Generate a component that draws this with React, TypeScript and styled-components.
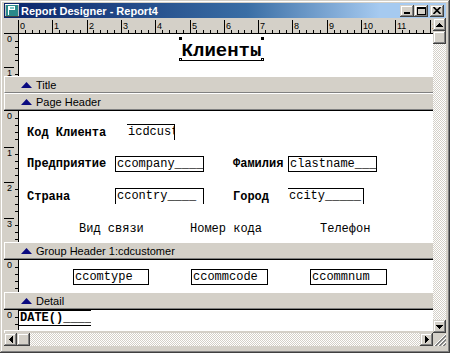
import React from "react";
import styled, { createGlobalStyle, css } from "styled-components";

const FACE = "#d4d0c8";
const SHADOW = "#808080";
const DARK = "#404040";
const MONO = `"Liberation Mono", "DejaVu Sans Mono", monospace`;
const SANS = `"Liberation Sans", Arial, sans-serif`;

const GlobalStyle = createGlobalStyle`
  html, body {
    margin: 0;
    padding: 0;
    background: ${FACE};
  }
  body {
    font-family: ${SANS};
  }
`;

const raised = css`
  background-color: ${FACE};
  box-shadow: inset -1px -1px ${DARK}, inset 1px 1px ${FACE},
    inset -2px -2px ${SHADOW}, inset 2px 2px #ffffff;
`;

const checker = css`
  background-color: #ffffff;
  background-image: repeating-conic-gradient(${FACE} 0% 25%, #ffffff 0% 50%);
  background-size: 2px 2px;
`;

const Window = styled.div`
  width: 450px;
  height: 353px;
  box-sizing: border-box;
  padding: 3px 4px 7px 4px;
  display: flex;
  flex-direction: column;
  background: ${FACE};
  box-shadow: inset -1px -1px ${DARK}, inset 1px 1px ${FACE},
    inset -2px -2px ${SHADOW}, inset 2px 2px #ffffff;
`;

const TitleBar = styled.div`
  flex: none;
  height: 15px;
  display: flex;
  align-items: center;
  padding: 0 2px 0 1px;
  background: linear-gradient(to right, #0a246a, #3a6ea5 55%, #a6caf0 85%);
`;

const WindowTitle = styled.span`
  margin-left: 2px;
  color: #ffffff;
  font: bold 11px ${SANS};
  white-space: nowrap;
`;

const CaptionButtons = styled.div`
  margin-left: auto;
  display: flex;
  align-items: center;
`;

const CaptionButton = styled.div<{ $gap?: boolean }>`
  ${raised};
  width: 14px;
  height: 12px;
  margin-left: ${(p) => (p.$gap ? 2 : 0)}px;
  display: flex;
  align-items: center;
  justify-content: center;
`;

const Workspace = styled.div`
  flex: 1;
  min-height: 0;
  display: grid;
  grid-template-columns: 1fr 13px;
  grid-template-rows: 1fr 13px;
`;

const Designer = styled.div`
  min-height: 0;
  overflow: hidden;
  display: flex;
  flex-direction: column;
`;

const RulerRow = styled.div`
  flex: none;
  height: 16px;
  display: flex;
  background: ${FACE};
  overflow: hidden;
`;

const RulerCorner = styled.div`
  flex: none;
  width: 14px;
  height: 16px;
  box-sizing: border-box;
  border-bottom: 1px solid #000;
`;

const Section = styled.div<{ $h: number; $line?: boolean }>`
  flex: none;
  height: ${(p) => p.$h}px;
  display: grid;
  grid-template-columns: 15px 1fr;
  border-top: ${(p) => (p.$line ? "1px solid #000" : "none")};
`;

const VRulerCol = styled.div`
  background: ${FACE};
  border-right: 1px solid #000;
  overflow: hidden;
`;

const Canvas = styled.div`
  position: relative;
  background: #ffffff;
  overflow: hidden;
  color: #000;
`;

const Band = styled.div`
  flex: none;
  height: 15px;
  display: flex;
  align-items: center;
  gap: 4px;
  padding-left: 16px;
  background: ${FACE};
  border-top: 1px solid #ffffff;
  border-left: 1px solid #ffffff;
  border-bottom: 1px solid ${SHADOW};
  font: 11px ${SANS};
  color: #000;
  white-space: nowrap;
`;

const TitleControl = styled.div`
  position: absolute;
  left: 161px;
  top: 4px;
  width: 83px;
  height: 23px;
  box-sizing: border-box;
  padding-top: 4px;
  border-bottom: 1px solid #000;
  font: bold 19px/19px ${MONO};
  text-align: center;
  white-space: nowrap;
`;

const Handle = styled.span<{ $v: "top" | "bottom"; $h: "left" | "right" }>`
  position: absolute;
  ${(p) => p.$v}: -1px;
  ${(p) => p.$h}: -1px;
  width: 3px;
  height: 3px;
  box-sizing: border-box;
  background: ${(p) => (p.$v === "top" ? "#000" : "#fff")};
  border: 1px solid #000;
`;

const Label = styled.span<{ $x: number; $y: number; $bold?: boolean }>`
  position: absolute;
  left: ${(p) => p.$x}px;
  top: ${(p) => p.$y}px;
  font-family: ${MONO};
  font-size: 12px;
  line-height: 14px;
  font-weight: ${(p) => (p.$bold ? 700 : 400)};
  white-space: pre;
`;

const Field = styled.div<{
  $x: number;
  $y: number;
  $w: number;
  $edges: string;
  $bold?: boolean;
}>`
  position: absolute;
  left: ${(p) => p.$x}px;
  top: ${(p) => p.$y}px;
  width: ${(p) => p.$w}px;
  height: 16px;
  box-sizing: border-box;
  border: 0 solid #000;
  border-width: ${(p) => p.$edges};
  padding-left: 1px;
  font-family: ${MONO};
  font-size: 12px;
  line-height: 14px;
  font-weight: ${(p) => (p.$bold ? 700 : 400)};
  white-space: pre;
  overflow: hidden;
`;

const VScroll = styled.div`
  ${checker};
  display: flex;
  flex-direction: column;
  justify-content: space-between;
`;

const ScrollTop = styled.div`
  display: flex;
  flex-direction: column;
`;

const HScroll = styled.div`
  ${checker};
  display: flex;
  justify-content: space-between;
`;

const ScrollLeft = styled.div`
  display: flex;
`;

const ScrollButton = styled.div`
  ${raised};
  width: 13px;
  height: 13px;
  flex: none;
  display: flex;
  align-items: center;
  justify-content: center;
`;

const Grip = styled.div`
  background: ${FACE};
  display: flex;
  align-items: flex-end;
  justify-content: flex-end;
`;

const AppIcon = () => (
  <svg width="14" height="13" viewBox="0 0 14 13" shapeRendering="crispEdges">
    <rect x="0" y="0" width="14" height="13" fill="#c0c0c0" />
    <rect x="0" y="0" width="14" height="1" fill="#ffffff" />
    <rect x="1" y="1" width="12" height="11" fill="#2a8a8a" />
    <rect x="3" y="2" width="1" height="9" fill="#ffffff" />
    <rect x="4" y="2" width="6" height="4" fill="#ffffff" />
    <rect x="5" y="3" width="4" height="2" fill="#7fc7c7" />
    <rect x="0" y="12" width="14" height="1" fill="#404040" />
  </svg>
);

const MinGlyph = () => (
  <svg width="8" height="7" shapeRendering="crispEdges">
    <rect x="1" y="5" width="6" height="2" fill="#000" />
  </svg>
);

const MaxGlyph = () => (
  <svg width="9" height="8" shapeRendering="crispEdges">
    <rect x="0" y="0" width="9" height="2" fill="#000" />
    <rect x="0" y="0" width="1" height="8" fill="#000" />
    <rect x="8" y="0" width="1" height="8" fill="#000" />
    <rect x="0" y="7" width="9" height="1" fill="#000" />
  </svg>
);

const CloseGlyph = () => (
  <svg width="8" height="7" viewBox="0 0 8 7">
    <path d="M0.5 0 L7.5 7 M7.5 0 L0.5 7" stroke="#000" strokeWidth="1.6" />
  </svg>
);

type Dir = "up" | "down" | "left" | "right";

const Arrow = ({ dir }: { dir: Dir }) => {
  const rows = [1, 3, 5, 7];
  const rects = rows.map((w, i) => {
    const off = (7 - w) / 2;
    if (dir === "up") return <rect key={i} x={off} y={i} width={w} height={1} />;
    if (dir === "down") return <rect key={i} x={off} y={3 - i} width={w} height={1} />;
    if (dir === "left") return <rect key={i} x={i} y={off} width={1} height={w} />;
    return <rect key={i} x={3 - i} y={off} width={1} height={w} />;
  });
  const horiz = dir === "up" || dir === "down";
  return (
    <svg
      width={horiz ? 7 : 4}
      height={horiz ? 4 : 7}
      fill="#000"
      shapeRendering="crispEdges"
    >
      {rects}
    </svg>
  );
};

const BandArrow = () => (
  <svg width="11" height="6" viewBox="0 0 11 6">
    <polygon points="5.5,0 11,6 0,6" fill="#0a0a80" />
  </svg>
);

const GripLines = () => (
  <svg width="12" height="12" viewBox="0 0 12 12">
    {[0, 4, 8].map((o) => (
      <g key={o}>
        <line x1={12} y1={o} x2={o} y2={12} stroke="#ffffff" />
        <line x1={12} y1={o + 1} x2={o + 1} y2={12} stroke={SHADOW} />
        <line x1={12} y1={o + 2} x2={o + 2} y2={12} stroke={SHADOW} />
      </g>
    ))}
  </svg>
);

const H_UNIT = 34.3;
const RULER_W = 415;

const HRuler = () => {
  const ticks: React.ReactNode[] = [];
  const labels: React.ReactNode[] = [];
  for (let i = 0; i <= 12; i++) {
    const x = Math.round(i * H_UNIT) + 0.5;
    ticks.push(<line key={`m${i}`} x1={x} y1={2} x2={x} y2={15} />);
    labels.push(
      <text key={`t${i}`} x={x + 1.5} y={11}>
        {i === 12 ? "1" : i}
      </text>
    );
    for (let j = 1; j < 5; j++) {
      const xm = Math.round((i + j / 5) * H_UNIT) + 0.5;
      if (xm < RULER_W) {
        ticks.push(<line key={`n${i}-${j}`} x1={xm} y1={12} x2={xm} y2={15} />);
      }
    }
  }
  return (
    <svg width={RULER_W} height="16" style={{ flex: "none" }}>
      <g stroke="#000" strokeWidth="1" shapeRendering="crispEdges">
        {ticks}
        <line x1={0} y1={15.5} x2={RULER_W} y2={15.5} />
      </g>
      <g fill="#000" fontFamily="Liberation Sans, Arial, sans-serif" fontSize="9">
        {labels}
      </g>
    </svg>
  );
};

const VRuler = ({ height, unit }: { height: number; unit: number }) => {
  const ticks: React.ReactNode[] = [];
  const labels: React.ReactNode[] = [
    <text key="t0" x={3} y={8}>
      0
    </text>,
  ];
  for (let k = 0; k * unit < height; k++) {
    const y = Math.round(k * unit) + 0.5;
    if (k > 0) {
      ticks.push(<line key={`m${k}`} x1={0} y1={y} x2={10} y2={y} />);
      if (y + 8 <= height) {
        labels.push(
          <text key={`t${k}`} x={3} y={y + 8}>
            {k}
          </text>
        );
      }
    }
    for (let j = 1; j < 5; j++) {
      const ym = Math.round((k + j / 5) * unit) + 0.5;
      if (ym < height) {
        ticks.push(<line key={`n${k}-${j}`} x1={11} y1={ym} x2={14} y2={ym} />);
      }
    }
  }
  return (
    <svg width="14" height={height}>
      <g stroke="#000" strokeWidth="1" shapeRendering="crispEdges">
        {ticks}
      </g>
      <g fill="#000" fontFamily="Liberation Sans, Arial, sans-serif" fontSize="9">
        {labels}
      </g>
    </svg>
  );
};

const FULL = "1px";

export default function App() {
  return (
    <>
      <GlobalStyle />
      <Window>
        <TitleBar>
          <AppIcon />
          <WindowTitle>Report Designer - Report4</WindowTitle>
          <CaptionButtons>
            <CaptionButton>
              <MinGlyph />
            </CaptionButton>
            <CaptionButton>
              <MaxGlyph />
            </CaptionButton>
            <CaptionButton $gap>
              <CloseGlyph />
            </CaptionButton>
          </CaptionButtons>
        </TitleBar>
        <Workspace>
          <Designer>
            <RulerRow>
              <RulerCorner />
              <HRuler />
            </RulerRow>

            <Section $h={42}>
              <VRulerCol>
                <VRuler height={42} unit={33} />
              </VRulerCol>
              <Canvas>
                <TitleControl>
                  Клиенты
                  <Handle $v="top" $h="left" />
                  <Handle $v="top" $h="right" />
                  <Handle $v="bottom" $h="left" />
                  <Handle $v="bottom" $h="right" />
                </TitleControl>
              </Canvas>
            </Section>
            <Band>
              <BandArrow />
              Title
            </Band>
            <Band>
              <BandArrow />
              Page Header
            </Band>

            <Section $h={131} $line>
              <VRulerCol>
                <VRuler height={131} unit={35.6} />
              </VRulerCol>
              <Canvas>
                <Label $x={8} $y={15} $bold>
                  Код Клиента
                </Label>
                <Field $x={108} $y={13} $w={48} $edges="1px 1px 0 0">
                  icdcust
                </Field>

                <Label $x={8} $y={46} $bold>
                  Предприятие
                </Label>
                <Field $x={96} $y={45} $w={89} $edges={FULL}>
                  ccompany____
                </Field>
                <Label $x={214} $y={46} $bold>
                  Фамилия
                </Label>
                <Field $x={269} $y={45} $w={89} $edges={FULL}>
                  clastname___
                </Field>

                <Label $x={8} $y={79} $bold>
                  Страна
                </Label>
                <Field $x={96} $y={77} $w={89} $edges="1px 1px 0 1px">
                  ccontry____
                </Field>
                <Label $x={214} $y={79} $bold>
                  Город
                </Label>
                <Field $x={269} $y={77} $w={76} $edges="1px 1px 0 0">
                  ccity_____
                </Field>

                <Label $x={60} $y={111}>
                  Вид связи
                </Label>
                <Label $x={171} $y={111}>
                  Номер кода
                </Label>
                <Label $x={301} $y={111}>
                  Телефон
                </Label>
              </Canvas>
            </Section>
            <Band>
              <BandArrow />
              Group Header 1:cdcustomer
            </Band>

            <Section $h={32} $line>
              <VRulerCol>
                <VRuler height={32} unit={35.6} />
              </VRulerCol>
              <Canvas>
                <Field $x={54} $y={9} $w={76} $edges={FULL}>
                  ccomtype
                </Field>
                <Field $x={172} $y={9} $w={77} $edges={FULL}>
                  ccommcode
                </Field>
                <Field $x={291} $y={9} $w={77} $edges={FULL}>
                  ccommnum
                </Field>
              </Canvas>
            </Section>
            <Band>
              <BandArrow />
              Detail
            </Band>

            <Section $h={20} $line>
              <VRulerCol>
                <VRuler height={20} unit={35.6} />
              </VRulerCol>
              <Canvas>
                <Field $x={0} $y={0} $w={72} $edges="1px 0" $bold>
                  DATE()____
                </Field>
              </Canvas>
            </Section>
            <Band>
              <BandArrow />
              Group Footer 1:cdcustomer
            </Band>
          </Designer>

          <VScroll>
            <ScrollTop>
              <ScrollButton>
                <Arrow dir="up" />
              </ScrollButton>
              <ScrollButton />
            </ScrollTop>
            <ScrollButton>
              <Arrow dir="down" />
            </ScrollButton>
          </VScroll>

          <HScroll>
            <ScrollLeft>
              <ScrollButton>
                <Arrow dir="left" />
              </ScrollButton>
              <ScrollButton />
            </ScrollLeft>
            <ScrollButton>
              <Arrow dir="right" />
            </ScrollButton>
          </HScroll>

          <Grip>
            <GripLines />
          </Grip>
        </Workspace>
      </Window>
    </>
  );
}
